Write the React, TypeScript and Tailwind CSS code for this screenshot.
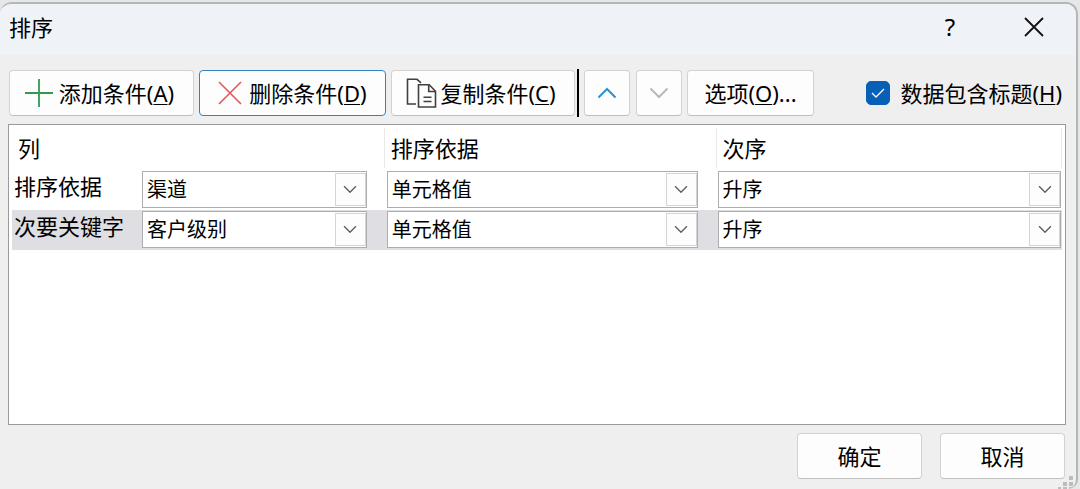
import React, { useState } from "react";

const buttonBase =
  "flex h-[46px] items-center justify-center rounded-[4px] border bg-[#fdfdfd] whitespace-nowrap";
const plainButton = `${buttonBase} border-[#d2d2d2] border-b-[#bfbfbf]`;

function AccessKey({ letter }: { letter: string }) {
  return (
    <span>
      (<span className="underline decoration-1 underline-offset-2">{letter}</span>)
    </span>
  );
}

function Chevron({ className }: { className: string }) {
  return (
    <svg viewBox="0 0 20 12" className={className} fill="none" stroke="currentColor" aria-hidden="true">
      <path d="M1.5 1.5 10 10l8.500-8.500" strokeWidth="2" />
    </svg>
  );
}

function PlusIcon() {
  return (
    <svg viewBox="0 0 28 28" className="size-7 shrink-0 text-[#2f9a50]" stroke="currentColor" aria-hidden="true">
      <path d="M14 0v28M0 14h28" strokeWidth="1.800" />
    </svg>
  );
}

function CrossIcon() {
  return (
    <svg viewBox="0 0 24 24" className="size-6 shrink-0 text-[#e0575b]" stroke="currentColor" aria-hidden="true">
      <path d="M1 1l22 22M23 1 1 23" strokeWidth="1.600" />
    </svg>
  );
}

function CopyIcon() {
  return (
    <svg
      viewBox="0 0 31 30"
      className="h-[30px] w-[31px] shrink-0 text-[#404040]"
      fill="none"
      stroke="currentColor"
      strokeWidth="1.600"
      aria-hidden="true"
    >
      <path d="M10 26H1.500V1.300H11l4 3.500" />
      <path d="M12.500 6.700h10.700l6.300 6.500V29h-17z" />
      <path d="M22.700 7v6.500h6.500M17.500 19.200h8M17.500 23.500h8" />
    </svg>
  );
}

function Picker({ label, options }: { label: string; options: string[] }) {
  return (
    <div className="relative min-w-0 flex-1">
      <select
        aria-label={label}
        className="block h-[37px] w-full appearance-none rounded-none border border-[#adadad] bg-white pr-9 pl-1 text-[20px] leading-[30px] text-black"
      >
        {options.map((o) => (
          <option key={o}>{o}</option>
        ))}
      </select>
      <span className="pointer-events-none absolute top-[2px] right-[1px] bottom-[2px] flex w-[31px] items-center justify-center border border-[#d4d4d4] bg-[#fdfdfd]">
        <Chevron className="h-[9px] w-[14px] text-[#606060]" />
      </span>
    </div>
  );
}

const levels = [
  { name: "排序依据", column: "渠道", alternate: "客户级别", selected: false },
  { name: "次要关键字", column: "客户级别", alternate: "渠道", selected: true },
];

export default function App() {
  const [hasHeader, setHasHeader] = useState(true);

  return (
    <div className="flex min-h-screen flex-col bg-[#e6e8e8] pt-[2px] pr-[2px] font-['Noto_Sans','Noto_Sans_CJK_SC',sans-serif] text-[22px] leading-[30px] text-black">
      <main className="relative flex flex-1 flex-col overflow-hidden rounded-t-[12px] rounded-br-[10px] border-t-2 border-r-2 border-[#b4b6b8] bg-[#efefef]">
        <header className="flex h-[51px] items-center bg-[#eff3f8] pr-8 pb-[5px] pl-[9px]">
          <h1 className="flex-1">排序</h1>
          <button type="button" aria-label="帮助" className="mr-[64px] w-5 text-center text-[24px]">
            ?
          </button>
          <button type="button" aria-label="关闭" className="flex size-5 items-center justify-center">
            <svg viewBox="0 0 20 20" className="size-5" stroke="#111" strokeWidth="1.800" aria-hidden="true">
              <path d="M1 1l18 18M19 1 1 19" />
            </svg>
          </button>
        </header>

        <div className="mt-[14px] flex h-[48px] items-center pr-[14px] pl-[9px]">
          <button type="button" className={`${plainButton} w-[185px] gap-[6px] pr-1`}>
            <PlusIcon />
            <span>添加条件<AccessKey letter="A" /></span>
          </button>
          <button type="button" className={`${buttonBase} ml-[5px] w-[187px] gap-[7px] border-[#2f83c5]`}>
            <CrossIcon />
            <span>删除条件<AccessKey letter="D" /></span>
          </button>
          <button type="button" className={`${plainButton} ml-[5px] w-[184px] gap-[3px] pr-1`}>
            <CopyIcon />
            <span>复制条件<AccessKey letter="C" /></span>
          </button>
          <span className="ml-[2px] h-[48px] w-[2px] bg-black" />
          <button type="button" aria-label="上移" className={`${plainButton} ml-[5px] w-[46px] text-[#2e90d0]`}>
            <Chevron className="h-[12px] w-5 rotate-180" />
          </button>
          <button type="button" aria-label="下移" disabled className={`${plainButton} ml-[6px] w-[46px] text-[#b9b9b9]`}>
            <Chevron className="h-[12px] w-5" />
          </button>
          <button type="button" className={`${plainButton} ml-[5px] w-[127px]`}>
            <span>选项<AccessKey letter="O" />...</span>
          </button>
          <label className="ml-auto flex items-center gap-[10px] whitespace-nowrap">
            <span className="grid size-6 place-items-center">
              <input
                type="checkbox"
                checked={hasHeader}
                onChange={(e) => setHasHeader(e.target.checked)}
                className="peer col-start-1 row-start-1 size-6 appearance-none rounded-[5px] border border-[#8a8a8a] bg-white checked:border-[#0560b6] checked:bg-[#0560b6]"
              />
              <svg
                viewBox="0 0 14 10"
                className="pointer-events-none invisible col-start-1 row-start-1 h-[10px] w-[14px] peer-checked:visible"
                fill="none"
                stroke="#fff"
                strokeWidth="1.300"
                aria-hidden="true"
              >
                <path d="M1 5l4 4 8-8" />
              </svg>
            </span>
            <span>数据包含标题<AccessKey letter="H" /></span>
          </label>
        </div>

        <section className="mt-[7px] mr-[10px] ml-2 flex-1 border border-[#9a9a9a] bg-white p-[3px]">
          <table className="w-full table-fixed border-collapse">
            <colgroup>
              <col className="w-[35.5%]" />
              <col className="w-[31.6%]" />
              <col />
            </colgroup>
            <thead>
              <tr className="h-[42px] text-left">
                <th scope="col" className="p-0 pl-[6px] align-top font-normal">
                  <div className="h-10 border-r border-[#e8e8e8] leading-[40px]">列</div>
                </th>
                <th scope="col" className="p-0 align-top font-normal">
                  <div className="h-10 border-r border-[#e8e8e8] pl-[6px] leading-[40px]">排序依据</div>
                </th>
                <th scope="col" className="p-0 align-top font-normal">
                  <div className="h-10 border-r border-[#e8e8e8] pl-[6px] leading-[40px]">次序</div>
                </th>
              </tr>
            </thead>
            <tbody>
              {levels.map((level) => (
                <tr key={level.name} className={level.selected ? "h-10 bg-[#dedee3]" : "h-10"}>
                  <td className="p-0 pt-[1px] align-top">
                    <div className="flex items-start pr-[18px]">
                      <span className="w-[130px] shrink-0 pl-[2px] leading-[30px]">{level.name}</span>
                      <Picker label={`${level.name} 列`} options={[level.column, level.alternate]} />
                    </div>
                  </td>
                  <td className="p-0 pt-[1px] align-top">
                    <div className="flex pr-[19px] pl-[2px]">
                      <Picker label={`${level.name} 排序依据`} options={["单元格值"]} />
                    </div>
                  </td>
                  <td className="p-0 pt-[1px] align-top">
                    <div className="flex pr-[1px] pl-[1px]">
                      <Picker label={`${level.name} 次序`} options={["升序", "降序"]} />
                    </div>
                  </td>
                </tr>
              ))}
            </tbody>
          </table>
        </section>

        <footer className="flex justify-end gap-[18px] pt-2 pr-[11px] pb-[10px]">
          <button type="button" className={`${plainButton} w-[125px]`}>确定</button>
          <button type="button" className={`${plainButton} w-[125px]`}>取消</button>
        </footer>

        <svg viewBox="0 0 16 13" className="absolute right-[2px] bottom-0 h-[13px] w-4" fill="#bcbcbc" aria-hidden="true">
          <path d="M11 0h4v4h-4zM5 6h4v4H5zM11 6h4v4h-4zM0 11h3v2H0zM5 11h4v2H5zM11 11h4v2h-4z" />
        </svg>
      </main>
    </div>
  );
}
